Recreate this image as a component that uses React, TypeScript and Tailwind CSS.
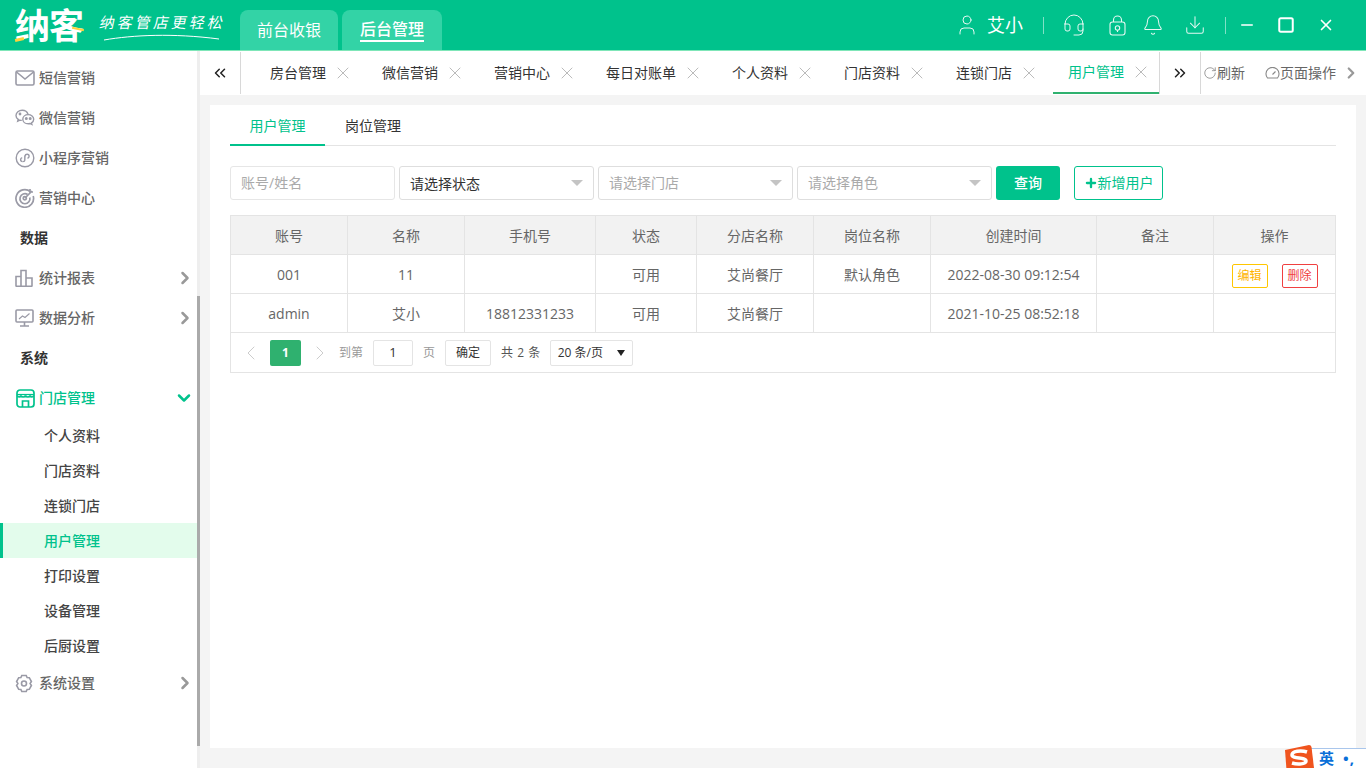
import {
  Bell,
  ChevronDown,
  ChevronLeft,
  ChevronRight,
  ChevronsLeft,
  ChevronsRight,
  Download,
  Headset,
  Minus,
  Plus,
  RotateCw,
  Square,
  User,
  X,
} from 'lucide-react'
import type { ReactNode } from 'react'

const FONT = { fontFamily: '"Open Sans", "Noto Sans CJK SC", sans-serif' }
const GRAY = '#9a9aa6'
const GREEN = '#00c28c'

const MailIcon = () => (
  <svg width="20" height="16" viewBox="0 0 20 16" fill="none" stroke={GRAY} strokeWidth="1.600">
    <rect x="1" y="1" width="18" height="14" rx="1.500" />
    <path d="M1.500 2l8.500 7 8.500-7" />
  </svg>
)

const WechatIcon = () => (
  <svg width="20" height="18" viewBox="0 0 20 18" fill="none" stroke={GRAY} strokeWidth="1.400">
    <path d="M13 5.200C12.300 2.800 10 1.200 7.200 1.200 3.900 1.200 1 3.400 1 6.400c0 1.600.8 3 2.200 4l-.5 1.800 2.200-1.100c.7.2 1.200.3 1.900.3" />
    <path d="M13.200 5.600c-3 0-5.400 2-5.400 4.600s2.400 4.600 5.400 4.600c.6 0 1.200-.1 1.800-.3l1.900 1-.4-1.600c1.300-.9 2.200-2.200 2.200-3.700 0-2.600-2.500-4.600-5.500-4.600Z" />
    <circle cx="5" cy="5" r=".7" fill={GRAY} />
    <circle cx="11.300" cy="9.600" r=".8" fill={GRAY} />
    <circle cx="15.200" cy="9.600" r=".8" fill={GRAY} />
  </svg>
)

const MiniProgramIcon = () => (
  <svg width="20" height="20" viewBox="0 0 20 20" fill="none" stroke={GRAY} strokeWidth="1.400">
    <circle cx="10" cy="10" r="8.800" />
    <path d="M7.600 13.600c-1.200 0-2-.9-2-2 0-1 .7-1.800 1.600-2M9.800 7.600v4.600c0 .8-.9 1.400-1.900 1.400M9.800 12c0-1.600 0-3 .2-4 .2-1 1-1.700 2.100-1.700 1.100 0 2 .9 2 2 0 1-.7 1.800-1.600 2" />
  </svg>
)

const TargetIcon = () => (
  <svg width="20" height="20" viewBox="0 0 20 20" fill="none" stroke={GRAY} strokeWidth="1.700">
    <path d="M15.500 3.800A8.800 8.800 0 1 0 18.200 8" />
    <path d="M12.600 6.500A5 5 0 1 0 14.800 9.500" />
    <circle cx="9.800" cy="10.200" r="1.600" />
    <path d="M10 10l7-7M15 1v3h3" />
  </svg>
)

const ChartIcon = () => (
  <svg width="18" height="18" viewBox="0 0 18 18" fill="none" stroke={GRAY} strokeWidth="1.600">
    <path d="M1 17V7.500h5V17M6 17V1.500h5V17M11 17V9h6v8M.5 17.200h17" />
  </svg>
)

const MonitorChart = () => (
  <svg width="19" height="18" viewBox="0 0 19 18" fill="none" stroke={GRAY} strokeWidth="1.600">
    <rect x="1" y="1" width="17" height="12" rx="1" />
    <path d="M9.500 13v4M5 17h9" />
    <path d="M4 10l3.500-3 2.500 1.500L14.500 4.500" strokeWidth="1.100" />
  </svg>
)

const StoreIcon = () => (
  <svg width="19" height="19" viewBox="0 0 19 19" fill="none" stroke={GREEN} strokeWidth="1.700">
    <rect x="1" y="1" width="17" height="17" rx="3" />
    <path d="M1.500 6.500c0 2 3 2 3.300 0 .3 2 4.400 2 4.700 0 .3 2 4.400 2 4.700 0 .3 2 3.300 2 3.300 0" />
    <path d="M1 5.500h17" strokeWidth="1.200" />
    <path d="M6.500 18v-6h6v6" />
  </svg>
)

const GearIcon = () => (
  <svg width="18" height="19" viewBox="0 0 18 19" fill="none" stroke={GRAY} strokeWidth="1.600">
    <path d="M6.800 1.500h4.400l.9 2 2.200.2 2.100 3.800-1.300 2 1.300 2-2.100 3.800-2.200.2-.9 2H6.800l-.9-2-2.200-.2-2.100-3.800 1.300-2-1.300-2 2.100-3.800 2.200-.2Z" />
    <circle cx="9" cy="9.500" r="2.500" />
  </svg>
)

const LockCircle = () => (
  <svg width="18" height="21" viewBox="0 0 18 21" fill="none" stroke="white" strokeWidth="1.100" opacity="0.9">
    <rect x="1" y="7" width="15" height="13" rx="2.500" />
    <path d="M4.500 7V5a4 4 0 0 1 8 0v2" />
    <circle cx="8.500" cy="13" r="2.200" />
    <path d="M8.500 15.200V17" />
  </svg>
)

const SogouLogo = () => (
  <svg width="32" height="28" viewBox="0 0 32 28">
    <path d="M2 6 L26 1 Q28 1 28.500 3 L31 24 L6 28 Q4 28 3.500 26 Z" fill="#f0541e" />
    <path d="M24 8C18 6 9 7 9 11c0 4 14 2 14 6 0 3-8 4-14 2" fill="none" stroke="white" strokeWidth="3.500" />
  </svg>
)

type MenuRow =
  | { kind: 'item'; label: string; icon: ReactNode; arrow?: boolean }
  | { kind: 'group'; label: string }

const marketing: MenuRow[] = [
  { kind: 'item', label: '短信营销', icon: <MailIcon /> },
  { kind: 'item', label: '微信营销', icon: <WechatIcon /> },
  { kind: 'item', label: '小程序营销', icon: <MiniProgramIcon /> },
  { kind: 'item', label: '营销中心', icon: <TargetIcon /> },
  { kind: 'group', label: '数据' },
  { kind: 'item', label: '统计报表', icon: <ChartIcon />, arrow: true },
  { kind: 'item', label: '数据分析', icon: <MonitorChart />, arrow: true },
  { kind: 'group', label: '系统' },
]

const storeMenu = ['个人资料', '门店资料', '连锁门店', '用户管理', '打印设置', '设备管理', '后厨设置']

const tabs = ['房台管理', '微信营销', '营销中心', '每日对账单', '个人资料', '门店资料', '连锁门店', '用户管理']

const columns = [117, 117, 131, 101, 117, 117, 166, 117, 122]
const headers = ['账号', '名称', '手机号', '状态', '分店名称', '岗位名称', '创建时间', '备注', '操作']

const rows = [
  ['001', '11', '', '可用', '艾尚餐厅', '默认角色', '2022-08-30 09:12:54', ''],
  ['admin', '艾小', '18812331233', '可用', '艾尚餐厅', '', '2021-10-25 08:52:18', ''],
]

function SideItem({ icon, label, arrow }: { icon: ReactNode; label: string; arrow?: boolean }) {
  return (
    <div className="flex h-10 items-center pl-[15px] pr-[2px]">
      <span className="flex w-6 shrink-0 items-center">{icon}</span>
      <span className="flex-1 text-sm font-medium text-[#666]">{label}</span>
      {arrow && <ChevronRight size={20} strokeWidth={3} color="#999" />}
    </div>
  )
}

function FakeSelect({ label, active }: { label: string; active?: boolean }) {
  return (
    <div className="flex h-[34px] w-[195px] items-center justify-between rounded-[3px] border border-[#dedede] pl-2.5 pr-[10px]">
      <span className={`text-sm ${active ? 'pt-[1px] text-[#333]' : 'text-[#aaa]'}`}>{label}</span>
      <span className="h-0 w-0 border-x-[6px] border-t-[6px] border-x-transparent border-t-[#c4c4c4]" />
    </div>
  )
}

export default function App() {
  return (
    <div className="flex h-screen w-screen flex-col overflow-hidden bg-[#f4f4f4]" style={FONT}>
      {/* 顶部 */}
      <header className="flex h-[51px] shrink-0 items-end border-b border-[#7fe6b8] bg-[#00c28c] pl-[15px] text-white">
        <div className="flex h-full w-[225px] shrink-0 items-center">
          <span className="relative w-[71px] text-[35px] leading-none font-bold tracking-[-1px]">
            纳客
            <span className="absolute bottom-[2px] left-0 h-[3px] w-[9px] -rotate-12 bg-[#ffd23c]" />
            <span className="absolute right-[2px] bottom-[13px] h-[2px] w-[12px] rotate-12 bg-[#ffd23c]" />
          </span>
          <div className="relative ml-[14px] pb-[6px]">
            <span className="block -skew-x-12 text-[15px] leading-none tracking-[3px] whitespace-nowrap">纳客管店更轻松</span>
            <svg className="absolute top-[18px] left-[3px]" width="118" height="8" viewBox="0 0 118 8" fill="none" stroke="white" strokeWidth="1">
              <path d="M1 7C30 2 70 0 116 6" />
            </svg>
          </div>
        </div>
        <div className="flex gap-1">
          <div className="flex h-10 w-[98px] items-center justify-center rounded-t-lg bg-[#33d3a6] text-base">前台收银</div>
          <div className="flex h-10 w-[100px] items-center justify-center rounded-t-lg bg-[#33d3a6] text-base font-medium">
            <span className="border-b-2 border-white leading-[22px]">后台管理</span>
          </div>
        </div>
        <div className="ml-auto flex h-full items-center pr-[31px]">
          <User size={24} strokeWidth={1} className="opacity-90" />
          <span className="ml-[8px] text-lg">艾小</span>
          <span className="ml-[20px] mr-[18px] h-[17px] w-px bg-white/50" />
          <Headset size={24} strokeWidth={1} className="opacity-90" />
          <span className="ml-[23px]"><LockCircle /></span>
          <Bell size={22} strokeWidth={1.100} className="ml-[15px] opacity-90" />
          <Download size={22} strokeWidth={1.100} className="ml-[20px] opacity-90" />
          <span className="ml-[19px] h-[17px] w-px bg-white/50" />
          <Minus size={18} strokeWidth={2} className="ml-[12px]" />
          <Square size={18} strokeWidth={2} absoluteStrokeWidth className="ml-[21px]" />
          <X size={18} strokeWidth={2.200} className="ml-[22px]" />
        </div>
      </header>

      <div className="flex min-h-0 flex-1">
        {/* 侧边栏 */}
        <aside className="flex w-[200px] shrink-0 bg-white">
          <nav className="w-[197px] pt-[7px]">
            {marketing.map((row) =>
              row.kind === 'item' ? (
                <SideItem key={row.label} icon={row.icon} label={row.label} arrow={row.arrow} />
              ) : (
                <div key={row.label} className="flex h-10 items-center pl-5 text-sm font-bold text-[#333]">
                  {row.label}
                </div>
              ),
            )}
            <div className="flex h-10 items-center pl-[16px] pr-[3px]">
              <span className="flex w-[23px] shrink-0 items-center">
                <StoreIcon />
              </span>
              <span className="flex-1 text-sm font-medium text-[#00c28c]">门店管理</span>
              <ChevronDown size={20} strokeWidth={3} color={GREEN} />
            </div>
            <div>
              {storeMenu.map((label) =>
                label === '用户管理' ? (
                  <div key={label} className="flex h-[35px] items-center border-l-[3px] border-[#00c28c] bg-[#e3fcec] pl-[41px] text-sm font-medium text-[#00c28c]">
                    {label}
                  </div>
                ) : (
                  <div key={label} className="flex h-[35px] items-center pl-[44px] text-sm font-medium text-[#444]">
                    {label}
                  </div>
                ),
              )}
            </div>
            <SideItem icon={<GearIcon />} label="系统设置" arrow />
          </nav>
          <div className="w-[3px] bg-[#eeeeee] pt-[245px]">
            <div className="h-[450px] bg-[#aaaaaa]" />
          </div>
        </aside>

        <main className="flex min-w-0 flex-1 flex-col">
          {/* 标签栏 */}
          <div className="flex h-[44px] shrink-0 items-stretch bg-white">
            <div className="my-[1px] flex w-[41px] items-center justify-center border-r border-[#d8d8d8]">
              <ChevronsLeft size={18} strokeWidth={2} color="#222" />
            </div>
            <div className="ml-[14px] flex">
              {tabs.map((tab) => {
                const active = tab === '用户管理'
                return (
                  <div
                    key={tab}
                    className={`mr-[6px] flex h-[43px] items-center pt-[1px] pl-[15px] last:mr-0 ${active ? 'border-b-2 border-[#2fb16f] text-[#00c28c]' : 'text-[#333]'}`}
                  >
                    <span className="text-sm">{tab}</span>
                    <span className="flex w-[35px] justify-center pr-[2px]">
                      <X size={20} strokeWidth={1} absoluteStrokeWidth color="#bbb" />
                    </span>
                  </div>
                )
              })}
            </div>
            <div className="my-[1px] flex w-[42px] items-center justify-center border-x border-[#d8d8d8]">
              <ChevronsRight size={18} strokeWidth={2} color="#222" />
            </div>
            <div className="flex flex-1 items-center pl-[2px] text-sm text-[#666]">
              <RotateCw size={14} strokeWidth={1.200} color="#777" />
              <span>刷新</span>
              <svg className="ml-[20px]" width="15" height="12" viewBox="0 0 15 12" fill="none" stroke="#888" strokeWidth="1.100">
                <path d="M2.500 11A6.500 6.500 0 1 1 12.500 11ZM7.500 7.500l3-3" />
              </svg>
              <span>页面操作</span>
              <ChevronRight size={18} strokeWidth={3} color="#999" className="ml-[6px]" />
            </div>
          </div>

          {/* 内容 */}
          <div className="min-h-0 flex-1 px-[10px] pt-[10px] pb-5">
            <div className="h-full bg-white px-5">
              <div className="flex h-[41px] border-b border-[#e4e4e4] text-sm">
                <div className="flex h-[41px] w-[95px] items-center justify-center border-b-2 border-[#00c28c] pt-[2px] text-[#00c28c]">用户管理</div>
                <div className="flex h-10 w-[96px] items-center justify-center pt-[2px] text-[#333]">岗位管理</div>
              </div>

              <div className="mt-[20px] flex items-center gap-1">
                <div className="flex h-[34px] w-[165px] items-center rounded-[3px] border border-[#e6e6e6] pl-2.5 text-sm text-[#aaa]">账号/姓名</div>
                <FakeSelect label="请选择状态" active />
                <FakeSelect label="请选择门店" />
                <FakeSelect label="请选择角色" />
                <button className="flex h-[34px] w-16 items-center justify-center rounded-[3px] bg-[#00c28c] text-sm font-medium text-white">查询</button>
                <button className="ml-[10px] flex h-[34px] w-[89px] items-center justify-center rounded-[3px] border border-[#00c28c] text-sm text-[#00c28c]">
                  <Plus size={14} strokeWidth={4} />
                  新增用户
                </button>
              </div>

              <table className="mt-[15px] w-[1105px] table-fixed border-collapse text-sm text-[#666]">
                <colgroup>
                  {columns.map((w, i) => (
                    <col key={i} style={{ width: w }} />
                  ))}
                </colgroup>
                <thead>
                  <tr className="h-[39px] bg-[#f2f2f2]">
                    {headers.map((h) => (
                      <th key={h} className="border border-[#e4e4e4] pt-[2px] font-normal">{h}</th>
                    ))}
                  </tr>
                </thead>
                <tbody>
                  {rows.map((row, i) => (
                    <tr key={i} className="h-[39px]">
                      {row.map((cell, j) => (
                        <td key={j} className="border border-[#e4e4e4] pt-[2px] text-center">{cell}</td>
                      ))}
                      <td className="border border-[#e4e4e4]">
                        {i === 0 && (
                          <div className="flex justify-center gap-[14px] pt-[3px]">
                            <span className="flex h-6 w-9 items-center justify-center rounded-[2px] border border-[#ffc600] text-xs text-[#ffb400]">编辑</span>
                            <span className="flex h-6 w-9 items-center justify-center rounded-[2px] border border-[#f04040] text-xs text-[#f04040]">删除</span>
                          </div>
                        )}
                      </td>
                    </tr>
                  ))}
                </tbody>
              </table>

              {/* 分页 */}
              <div className="flex h-10 w-[1106px] items-center border-x border-b border-[#e4e4e4] pl-[8px] text-xs text-[#999]">
                <ChevronLeft size={24} strokeWidth={1} color="#ccc" />
                <span className="ml-[7px] flex h-[26px] w-[31px] items-center justify-center rounded-[2px] bg-[#2fb16f] text-xs font-bold text-white">1</span>
                <ChevronRight size={24} strokeWidth={1} color="#ccc" className="ml-[7px]" />
                <span className="ml-[7px]">到第</span>
                <span className="ml-[10px] flex h-[26px] w-10 items-center justify-center rounded-[2px] border border-[#e4e4e4] text-[13px] text-[#333]">1</span>
                <span className="ml-[10px]">页</span>
                <span className="ml-[10px] flex h-[26px] w-[46px] items-center justify-center rounded-[2px] border border-[#e4e4e4] text-[#333]">确定</span>
                <span className="ml-[10px] tracking-[0.5px] text-[#555]">共 2 条</span>
                <div className="ml-[9px] flex h-[26px] w-[83px] items-center justify-between rounded-[2px] border border-[#e4e4e4] px-[7px] text-[#333]">
                  <span>20 条/页</span>
                  <span className="h-0 w-0 border-x-[4px] border-t-[6px] border-x-transparent border-t-[#222]" />
                </div>
              </div>
            </div>
          </div>
        </main>
      </div>

      {/* 输入法状态条 */}
      <div className="absolute bottom-0 left-[1283px] flex h-5 w-[83px] items-end">
        <span className="absolute bottom-[-4px] left-0 z-10">
          <SogouLogo />
        </span>
        <div className="ml-[27px] flex h-5 flex-1 items-center border-t border-[#a9c6ec] bg-white pl-[9px] text-[15px] font-bold text-[#0a6fd8]">
          英<span className="ml-[9px] tracking-[1px]">•,</span>
        </div>
      </div>
    </div>
  )
}
